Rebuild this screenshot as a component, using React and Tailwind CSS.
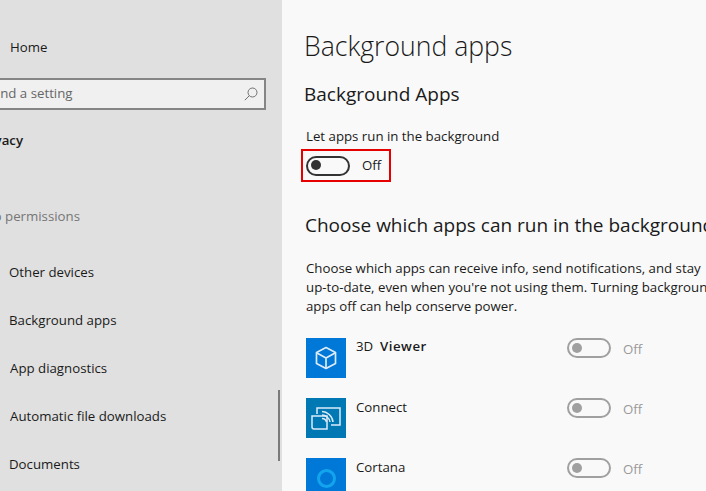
const font = "[font-family:'Open_Sans','Noto_Sans',sans-serif]";

function Toggle({ muted }) {
  return (
    <div className={`flex h-[20px] w-[44px] items-center rounded-full border-2 pl-[3px] ${muted ? "border-[#a0a0a0]" : "border-[#333333]"}`}>
      <div className={`mt-[-1px] h-[10px] w-[10px] rounded-full ${muted ? "bg-[#a0a0a0]" : "bg-[#333333]"}`} />
    </div>
  );
}

function NavItem({ children, x }) {
  return (
    <div className={`flex h-[48px] items-center text-[13.25px] text-[#1a1a1a] ${x}`}>{children}</div>
  );
}

function CubeIcon() {
  return (
    <svg width="24" height="24" viewBox="0 0 24 24" fill="none" stroke="#dcecf9" strokeWidth="1.7" strokeLinejoin="round">
      <path d="M12 1.5 21.5 6.5V17.5L12 22.5 2.5 17.5V6.5Z" />
      <path d="M3 7 12 12 21 7M12 12V22.5" />
    </svg>
  );
}

function ConnectIcon() {
  return (
    <svg width="30" height="23" viewBox="0 0 30 23" fill="none" stroke="#dcecf9" strokeWidth="1.5">
      <path d="M6 7V1H29V18H20" />
      <path d="M1 9H16V22H3C1.8 22 1 21.2 1 20Z" />
      <path d="M11 4.5C16 4.5 21.5 9 22 15" />
      <path d="M11 8C14.5 8 18.5 11 19 15" />
      <path d="M11 11.5C13 11.5 15 13 15.5 15" />
    </svg>
  );
}

function AppRow({ icon, bg, name, nameClass }) {
  return (
    <div className="flex h-[60px] shrink-0 items-start pl-[24px]">
      <div className={`flex h-[40px] w-[40px] shrink-0 items-center justify-center ${bg}`}>{icon}</div>
      <div className={`w-[221px] shrink-0 pl-[10px] text-[13.25px] leading-[19px] text-[#1a1a1a] ${nameClass}`}>{name}</div>
      <Toggle muted />
      <span className="mt-[1px] pl-[12px] text-[13.25px] leading-[20px] text-[#9a9a9a]">Off</span>
    </div>
  );
}

export default function App() {
  return (
    <div className={`flex h-[491px] w-[706px] overflow-hidden bg-[#f9f9f9] ${font}`}>
      <aside className="relative h-full w-[282px] shrink-0 overflow-hidden bg-[#e0e0e0]">
        <div className="pt-[24px]">
          <NavItem x="pl-[10px]">Home</NavItem>
          <div className="ml-[-40px] mt-[6px] flex h-[32px] w-[306px] items-center justify-between border-2 border-[#858585] bg-[#f0f0f0] pl-[28px] pr-[6px] text-[13.25px] text-[#666666]">
            <span>Find a setting</span>
            <svg width="14" height="14" viewBox="0 0 14 14" fill="none" stroke="#707070" strokeWidth="1">
              <circle cx="8.5" cy="5.5" r="4.5" />
              <path d="M5.2 8.8 0.8 13.2" />
            </svg>
          </div>
          <div className="ml-[-23px] mt-[20px] h-[21px] text-[13.25px] font-semibold leading-[21px] text-[#1a1a1a]">Privacy</div>
          <div className="ml-[-23px] mt-[55px] h-[21px] text-[13.25px] leading-[21px] text-[#767676]">App permissions</div>
          <div className="mt-[22px]">
            <NavItem x="pl-[9px]">Other devices</NavItem>
            <NavItem x="pl-[9px]">Background apps</NavItem>
            <NavItem x="pl-[10px]">App diagnostics</NavItem>
            <NavItem x="pl-[10px]">Automatic file downloads</NavItem>
            <NavItem x="pl-[9px]">Documents</NavItem>
          </div>
        </div>
        <div className="absolute left-[278px] top-[390px] h-[71px] w-[2px] bg-[#7a7a7a]" />
      </aside>
      <main className="h-full min-w-0 flex-1 overflow-hidden whitespace-nowrap">
        <h1 className="pl-[22px] pt-[26px] text-[26.6px] font-light leading-[40px] text-[#1a1a1a]">Background apps</h1>
        <h2 className="pl-[22px] pt-[15px] text-[19px] leading-[27px] text-[#1a1a1a]">Background Apps</h2>
        <p className="pl-[24px] pt-[18px] text-[13.25px] leading-[20px] text-[#1a1a1a]">Let apps run in the background</p>
        <div className="ml-[19px] mt-[3px] flex h-[33px] w-[90px] items-center border-2 border-[#e60000] pl-[3px]">
          <Toggle />
          <span className="pl-[12px] text-[13.25px] text-[#1a1a1a]">Off</span>
        </div>
        <h2 className="pl-[23px] pt-[28px] text-[19px] leading-[30px] text-[#1a1a1a]">Choose which apps can run in the background</h2>
        <div className="pl-[24px] pt-[19px] text-[13.25px] leading-[19px] text-[#1a1a1a]">
          <div>Choose which apps can receive info, send notifications, and stay</div>
          <div>up-to-date, even when you're not using them. Turning background</div>
          <div>apps off can help conserve power.</div>
        </div>
        <div className="flex flex-col pt-[22px]">
          <AppRow
            bg="bg-[#0078d7]"
            icon={<CubeIcon />}
            nameClass="mt-[-1px]"
            name={
              <span className="flex">
                <span className="w-[24px]">3D</span>
                <span className="font-semibold tracking-[0.5px]">Viewer</span>
              </span>
            }
          />
          <AppRow bg="bg-[#0078b4]" icon={<ConnectIcon />} name="Connect" />
          <AppRow
            bg="bg-[#0078d7]"
            icon={<div className="h-[19px] w-[19px] rounded-full border-[3px] border-[#12a5ee]" />}
            name="Cortana"
          />
        </div>
      </main>
    </div>
  );
}
